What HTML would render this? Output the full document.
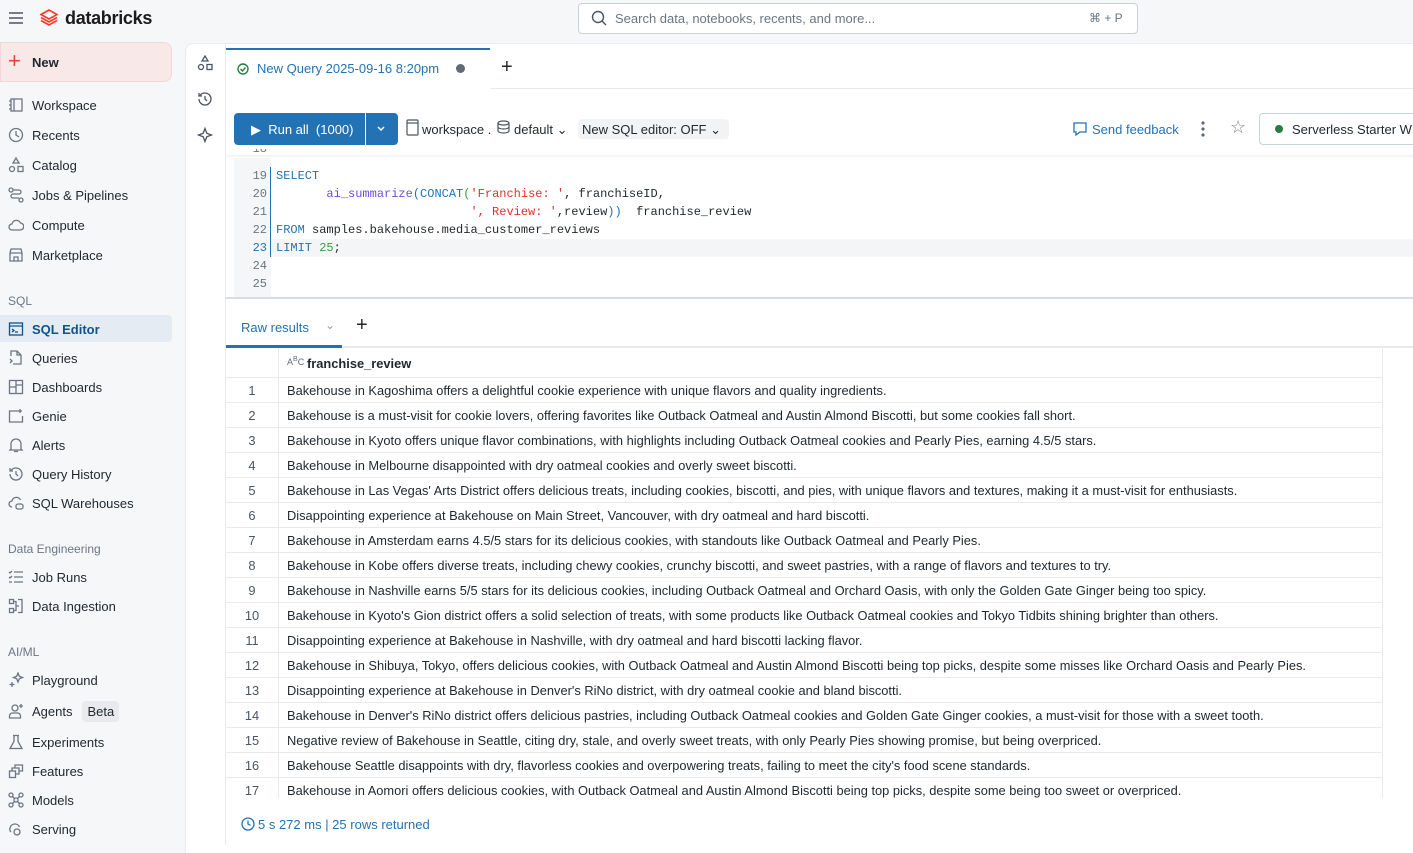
<!DOCTYPE html>
<html><head><meta charset="utf-8"><style>
*{box-sizing:border-box;margin:0;padding:0}
body{width:1413px;height:845px;overflow:hidden;background:#f6f7f9;font-family:"Liberation Sans",sans-serif;font-size:13px;color:#1f272d;position:relative}
.abs{position:absolute}
.nav{position:absolute;left:8px;display:flex;align-items:center;gap:8px;height:26px;font-size:13px}
.nav svg{width:16px;height:16px;stroke:#6b7682;fill:none;stroke-width:1.3}
.sec{position:absolute;left:8px;font-size:12px;color:#6b7682}
.code{position:absolute;left:276px;font-family:"Liberation Mono",monospace;font-size:12px;white-space:pre;line-height:18px}
.ln{position:absolute;left:234px;width:33px;text-align:right;font-family:"Liberation Mono",monospace;font-size:12px;color:#6b7682;line-height:18px}
.kw{color:#2272b4}.fn{color:#6b4fd8}.st{color:#e1302a}.nm{color:#3b9b3b}
.row{position:absolute;left:226px;width:1157px;height:25px;border-bottom:1px solid #e8eaed;font-size:12.85px}
.row .i{position:absolute;left:0;width:52px;text-align:center;top:5px;color:#4a5561}
.row .t{position:absolute;left:61px;top:5px;white-space:nowrap}
</style></head><body>
<!-- top bar -->
<svg class="abs" style="left:8px;top:11px" width="16" height="14" viewBox="0 0 16 14"><path d="M1 2h14M1 7h14M1 12h14" stroke="#4a5561" stroke-width="1.5"/></svg>
<svg class="abs" style="left:40px;top:9px" width="18" height="17" viewBox="0 0 18 17"><path d="M9 1L1 5.5 9 10 17 5.5z M1 8.5L9 13 17 8.5 M1 11.5L9 16 17 11.5" fill="none" stroke="#ff3621" stroke-width="1.6"/></svg>
<div class="abs" style="left:65px;top:8px;font-size:18px;font-weight:bold;color:#1b1b1b;letter-spacing:-0.3px">databricks</div>
<div class="abs" style="left:578px;top:3px;width:560px;height:31px;border:1px solid #cbd1d8;border-radius:4px;background:#fff"></div>
<svg class="abs" style="left:591px;top:10px" width="16" height="16" viewBox="0 0 16 16"><circle cx="7" cy="7" r="5.5" fill="none" stroke="#4a5561" stroke-width="1.4"/><path d="M11 11l4 4" stroke="#4a5561" stroke-width="1.4"/></svg>
<div class="abs" style="left:615px;top:11px;color:#6b7682">Search data, notebooks, recents, and more...</div>
<div class="abs" style="left:1089px;top:11px;color:#6b7682;font-size:12px">⌘ + P</div>
<!-- sidebar -->
<div class="abs" style="left:0;top:42px;width:172px;height:40px;background:#f8e8e8;border:1px solid #f3d7d7;border-radius:0 8px 8px 0"></div>
<div class="abs" style="left:8px;top:51px;font-size:22px;color:#e0443a;line-height:20px">+</div>
<div class="abs" style="left:32px;top:55px;font-weight:bold;font-size:13px">New</div>
<div class="nav" style="top:92px"><svg viewBox="0 0 16 16"><rect x="3" y="2" width="11" height="12"/><path d="M6 2v12M1 4h2M1 8h2M1 12h2"/></svg>Workspace</div>
<div class="nav" style="top:122px"><svg viewBox="0 0 16 16"><circle cx="8" cy="8" r="6.5"/><path d="M8 4v4l3 2"/></svg>Recents</div>
<div class="nav" style="top:152px"><svg viewBox="0 0 16 16"><path d="M8 1l3 5H5z"/><circle cx="4" cy="12" r="2.5"/><rect x="10" y="9.5" width="5" height="5"/></svg>Catalog</div>
<div class="nav" style="top:182px"><svg viewBox="0 0 16 16"><circle cx="3" cy="3" r="2"/><circle cx="13" cy="13" r="2"/><path d="M5 3h6a2 2 0 010 4H5a2 2 0 000 4h6"/></svg>Jobs &amp; Pipelines</div>
<div class="nav" style="top:212px"><svg viewBox="0 0 16 16"><path d="M4 13a3 3 0 010-6 4.5 4.5 0 018.5-1A3.5 3.5 0 0112 13z"/></svg>Compute</div>
<div class="nav" style="top:242px"><svg viewBox="0 0 16 16"><path d="M2 6l1-4h10l1 4M2 6v8h12V6M2 6h12M6 14v-4h4v4"/></svg>Marketplace</div>
<div class="sec" style="top:294px">SQL</div>
<div class="abs" style="left:0;top:315px;width:172px;height:27px;background:#e4ebf2;border-radius:0 4px 4px 0"></div>
<div class="nav" style="top:316px;color:#0e538b;font-weight:bold"><svg viewBox="0 0 16 16" style="stroke:#0e538b"><rect x="1.5" y="2" width="13" height="12"/><path d="M1.5 5h13M4 8l2 1.5L4 11M7 11h3"/></svg>SQL Editor</div>
<div class="nav" style="top:345px"><svg viewBox="0 0 16 16"><path d="M3 6V1h6l4 4v9H8M9 1v4h4M2 9l2 2-2 2M5 14h3"/></svg>Queries</div>
<div class="nav" style="top:374px"><svg viewBox="0 0 16 16"><rect x="1.5" y="1.5" width="13" height="13"/><path d="M8 1.5v13M1.5 8H8M8 6h6.5"/></svg>Dashboards</div>
<div class="nav" style="top:403px"><svg viewBox="0 0 16 16"><path d="M10 3H1.5v11h13V8M12 1v4M10 3h4"/></svg>Genie</div>
<div class="nav" style="top:432px"><svg viewBox="0 0 16 16"><path d="M3 12V7a5 5 0 0110 0v5l1 1H2zM6 14.5h4"/></svg>Alerts</div>
<div class="nav" style="top:461px"><svg viewBox="0 0 16 16"><path d="M2 8a6 6 0 106-6 6 6 0 00-5 2.5M2 2v3h3M8 5v3l2 2"/></svg>Query History</div>
<div class="nav" style="top:490px"><svg viewBox="0 0 16 16"><path d="M4 12a3 3 0 010-6 4.5 4.5 0 018.5-1"/><rect x="8" y="9" width="7" height="5" rx="2"/></svg>SQL Warehouses</div>
<div class="sec" style="top:542px">Data Engineering</div>
<div class="nav" style="top:564px"><svg viewBox="0 0 16 16"><path d="M6 3h9M6 8h9M6 13h9M1 3l1 1 2-2M1 8l1 1 2-2M1 13h3"/></svg>Job Runs</div>
<div class="nav" style="top:593px"><svg viewBox="0 0 16 16"><rect x="1.5" y="1.5" width="4" height="4"/><rect x="1.5" y="10.5" width="4" height="4"/><path d="M10 1.5h4v13h-4M5.5 3.5H8v9H5.5M8 8h3"/></svg>Data Ingestion</div>
<div class="sec" style="top:645px">AI/ML</div>
<div class="nav" style="top:667px"><svg viewBox="0 0 16 16"><path d="M10 1l1.3 3.2L14.5 5.5 11.3 6.8 10 10 8.7 6.8 5.5 5.5 8.7 4.2zM4 10v5M1.5 12.5h5"/></svg>Playground</div>
<div class="nav" style="top:698px"><svg viewBox="0 0 16 16"><circle cx="7" cy="5" r="3"/><path d="M1.5 15v-2a3 3 0 013-3h5a3 3 0 013 3v2zM13 1v4M11 3h4"/></svg>Agents <span style="background:#e8eaed;border-radius:4px;padding:3px 5px;margin-left:2px">Beta</span></div>
<div class="nav" style="top:729px"><svg viewBox="0 0 16 16"><path d="M5 1.5h6M6 1.5v6L2 14.5h12L10 7.5v-6"/></svg>Experiments</div>
<div class="nav" style="top:758px"><svg viewBox="0 0 16 16"><rect x="1.5" y="8" width="6" height="6.5"/><path d="M4 8V5h7v6H7.5M7 5V2h7.5v6H11"/></svg>Features</div>
<div class="nav" style="top:787px"><svg viewBox="0 0 16 16"><circle cx="3" cy="3" r="2"/><circle cx="13" cy="3" r="2"/><circle cx="3" cy="13" r="2"/><circle cx="13" cy="13" r="2"/><circle cx="8" cy="8" r="2"/><path d="M4.5 4.5l2 2M11.5 4.5l-2 2M4.5 11.5l2-2M11.5 11.5l-2-2"/></svg>Models</div>
<div class="nav" style="top:816px"><svg viewBox="0 0 16 16"><path d="M3 11a4 4 0 01-1-4 5 5 0 019.5-1"/><circle cx="9" cy="11" r="3"/></svg>Serving</div>
<!-- main panel -->
<div class="abs" style="left:185px;top:43px;width:1240px;height:810px;background:#fff;border-radius:8px 0 0 0;border-left:1px solid #e8eaed;border-top:1px solid #e8eaed"></div>
<div class="abs" style="left:225px;top:43px;width:1px;height:802px;background:#e8eaed"></div>
<svg class="abs" style="left:197px;top:55px" width="16" height="16" viewBox="0 0 16 16" fill="none" stroke="#4a5561" stroke-width="1.3"><path d="M8 1l3 5H5z"/><circle cx="4" cy="12" r="2.5"/><rect x="10" y="9.5" width="5" height="5"/></svg>
<svg class="abs" style="left:197px;top:91px" width="16" height="16" viewBox="0 0 16 16" fill="none" stroke="#4a5561" stroke-width="1.3"><path d="M2 8a6 6 0 106-6 6 6 0 00-5 2.5M2 2v3h3M8 5v3l2 2"/></svg>
<svg class="abs" style="left:197px;top:127px" width="16" height="16" viewBox="0 0 16 16" fill="none" stroke="#4a5561" stroke-width="1.3"><path d="M8 1.5L9.8 6.2 14.5 8 9.8 9.8 8 14.5 6.2 9.8 1.5 8 6.2 6.2z"/></svg>
<!-- tabs -->
<div class="abs" style="left:226px;top:88px;width:1187px;height:1px;background:#e8eaed"></div>
<div class="abs" style="left:226px;top:48px;width:264px;height:41px;background:#fff;border-top:2px solid #2272b4"></div>
<svg class="abs" style="left:237px;top:63px" width="12" height="12" viewBox="0 0 12 12" fill="none" stroke="#277c43" stroke-width="1.4"><circle cx="6" cy="6" r="5"/><path d="M3.5 6l2 2 3-3.5"/></svg>
<div class="abs" style="left:257px;top:61px;color:#2272b4;font-size:13px">New Query 2025-09-16 8:20pm</div>
<div class="abs" style="left:456px;top:64px;width:9px;height:9px;border-radius:50%;background:#5f6b77"></div>
<div class="abs" style="left:501px;top:56px;font-size:20px;color:#1f272d">+</div>
<!-- toolbar -->
<div class="abs" style="left:234px;top:113px;width:164px;height:32px;background:#2272b4;border-radius:4px"></div>
<div class="abs" style="left:365px;top:113px;width:1px;height:32px;background:#fff"></div>
<div class="abs" style="left:251px;top:122px;color:#fff;font-size:13px">▶&nbsp; Run all&nbsp; (1000)</div>
<svg class="abs" style="left:376px;top:125px" width="10" height="8" viewBox="0 0 10 8"><path d="M2 2l3 3 3-3" fill="none" stroke="#fff" stroke-width="1.5"/></svg>
<svg class="abs" style="left:406px;top:119px" width="13" height="17" viewBox="0 0 13 17" fill="none" stroke="#4a5561" stroke-width="1.2"><rect x="1" y="1" width="11" height="15" rx="1"/><path d="M1 4h11"/></svg>
<div class="abs" style="left:422px;top:122px">workspace .</div>
<svg class="abs" style="left:497px;top:120px" width="13" height="14" viewBox="0 0 13 14" fill="none" stroke="#4a5561" stroke-width="1.2"><ellipse cx="6.5" cy="3" rx="5.5" ry="2"/><path d="M1 3v8c0 1 2.5 2 5.5 2s5.5-1 5.5-2V3M1 7c0 1 2.5 2 5.5 2S12 8 12 7"/></svg>
<div class="abs" style="left:514px;top:122px">default ⌄</div>
<div class="abs" style="left:578px;top:119px;width:151px;height:20px;background:#f2f3f5;border-radius:4px"></div>
<div class="abs" style="left:582px;top:122px">New SQL editor: OFF ⌄</div>
<svg class="abs" style="left:1072px;top:121px" width="16" height="16" viewBox="0 0 16 16" fill="none" stroke="#2272b4" stroke-width="1.3"><path d="M2 2h12v9H8l-4 3v-3H2z"/><path d="M5.5 6.5h.1M8 6.5h.1M10.5 6.5h.1" stroke-width="1.6"/></svg>
<div class="abs" style="left:1092px;top:122px;color:#2272b4">Send feedback</div>
<div class="abs" style="left:1201px;top:121px;width:4px;height:16px;background:radial-gradient(circle at 2px 2px,#5f6b77 1.6px,transparent 1.8px) 0 0/4px 6px"></div>
<div class="abs" style="left:1230px;top:117px;font-size:18px;color:#7a8591">☆</div>
<div class="abs" style="left:1259px;top:113px;width:170px;height:32px;border:1px solid #cbd1d8;border-radius:4px"></div>
<div class="abs" style="left:1275px;top:125px;width:8px;height:8px;border-radius:50%;background:#277c43"></div>
<div class="abs" style="left:1292px;top:122px">Serverless Starter W</div>
<!-- editor -->
<div class="abs" style="left:226px;top:155px;width:1187px;height:3px;background:linear-gradient(#eef0f2,#fff)"></div>
<div class="abs" style="left:234px;top:158px;width:37px;height:140px;background:#f5f6f7"></div>
<div class="abs" style="left:271px;top:239px;width:1142px;height:18px;background:#f4f5f6"></div>
<div class="abs" style="left:270px;top:167px;width:1px;height:90px;background:#2272b4"></div>
<div class="ln" style="top:149px;height:10px;overflow:hidden;line-height:0">18</div>
<div class="ln" style="top:167px">19</div><div class="ln" style="top:185px">20</div><div class="ln" style="top:203px">21</div><div class="ln" style="top:221px">22</div><div class="ln" style="top:239px;color:#2272b4">23</div><div class="ln" style="top:257px">24</div><div class="ln" style="top:275px">25</div>
<div class="code" style="top:167px"><span class="kw">SELECT</span>
       <span class="fn">ai_summarize</span><span class="kw">(CONCAT</span><span class="nm">(</span><span class="st">'Franchise: '</span>, franchiseID,
                           <span class="st">', Review: '</span>,review<span class="kw">))</span>  franchise_review
<span class="kw">FROM</span> samples.bakehouse.media_customer_reviews
<span class="kw">LIMIT</span> <span class="nm">25</span>;</div>
<div class="abs" style="left:226px;top:297px;width:1187px;height:2px;background:#d8dde3"></div>
<!-- results -->
<div class="abs" style="left:241px;top:320px;color:#2272b4">Raw results</div>
<div class="abs" style="left:325px;top:318px;color:#9aa3ad;font-size:12px">⌄</div>
<div class="abs" style="left:356px;top:314px;font-size:20px">+</div>
<div class="abs" style="left:226px;top:346px;width:1187px;height:2px;background:#e8eaed"></div>
<div class="abs" style="left:226px;top:345px;width:116px;height:3px;background:#2272b4"></div>
<div class="abs" style="left:278px;top:348px;width:1px;height:450px;background:#e8eaed"></div>
<div class="abs" style="left:1382px;top:348px;width:1px;height:450px;background:#e8eaed"></div>
<div class="abs" style="left:226px;top:377px;width:1157px;height:1px;background:#e8eaed"></div>
<div class="abs" style="left:287px;top:356px;font-size:9px;color:#5f6b77">A<sup style="font-size:7px">B</sup>C</div>
<div class="abs" style="left:307px;top:356px;font-size:12.85px;font-weight:bold">franchise_review</div>
<div class="row" style="top:378px"><span class="i">1</span><span class="t">Bakehouse in Kagoshima offers a delightful cookie experience with unique flavors and quality ingredients.</span></div>
<div class="row" style="top:403px"><span class="i">2</span><span class="t">Bakehouse is a must-visit for cookie lovers, offering favorites like Outback Oatmeal and Austin Almond Biscotti, but some cookies fall short.</span></div>
<div class="row" style="top:428px"><span class="i">3</span><span class="t">Bakehouse in Kyoto offers unique flavor combinations, with highlights including Outback Oatmeal cookies and Pearly Pies, earning 4.5/5 stars.</span></div>
<div class="row" style="top:453px"><span class="i">4</span><span class="t">Bakehouse in Melbourne disappointed with dry oatmeal cookies and overly sweet biscotti.</span></div>
<div class="row" style="top:478px"><span class="i">5</span><span class="t">Bakehouse in Las Vegas' Arts District offers delicious treats, including cookies, biscotti, and pies, with unique flavors and textures, making it a must-visit for enthusiasts.</span></div>
<div class="row" style="top:503px"><span class="i">6</span><span class="t">Disappointing experience at Bakehouse on Main Street, Vancouver, with dry oatmeal and hard biscotti.</span></div>
<div class="row" style="top:528px"><span class="i">7</span><span class="t">Bakehouse in Amsterdam earns 4.5/5 stars for its delicious cookies, with standouts like Outback Oatmeal and Pearly Pies.</span></div>
<div class="row" style="top:553px"><span class="i">8</span><span class="t">Bakehouse in Kobe offers diverse treats, including chewy cookies, crunchy biscotti, and sweet pastries, with a range of flavors and textures to try.</span></div>
<div class="row" style="top:578px"><span class="i">9</span><span class="t">Bakehouse in Nashville earns 5/5 stars for its delicious cookies, including Outback Oatmeal and Orchard Oasis, with only the Golden Gate Ginger being too spicy.</span></div>
<div class="row" style="top:603px"><span class="i">10</span><span class="t">Bakehouse in Kyoto's Gion district offers a solid selection of treats, with some products like Outback Oatmeal cookies and Tokyo Tidbits shining brighter than others.</span></div>
<div class="row" style="top:628px"><span class="i">11</span><span class="t">Disappointing experience at Bakehouse in Nashville, with dry oatmeal and hard biscotti lacking flavor.</span></div>
<div class="row" style="top:653px"><span class="i">12</span><span class="t">Bakehouse in Shibuya, Tokyo, offers delicious cookies, with Outback Oatmeal and Austin Almond Biscotti being top picks, despite some misses like Orchard Oasis and Pearly Pies.</span></div>
<div class="row" style="top:678px"><span class="i">13</span><span class="t">Disappointing experience at Bakehouse in Denver's RiNo district, with dry oatmeal cookie and bland biscotti.</span></div>
<div class="row" style="top:703px"><span class="i">14</span><span class="t">Bakehouse in Denver's RiNo district offers delicious pastries, including Outback Oatmeal cookies and Golden Gate Ginger cookies, a must-visit for those with a sweet tooth.</span></div>
<div class="row" style="top:728px"><span class="i">15</span><span class="t">Negative review of Bakehouse in Seattle, citing dry, stale, and overly sweet treats, with only Pearly Pies showing promise, but being overpriced.</span></div>
<div class="row" style="top:753px"><span class="i">16</span><span class="t">Bakehouse Seattle disappoints with dry, flavorless cookies and overpowering treats, failing to meet the city's food scene standards.</span></div>
<div class="row" style="top:778px;border-bottom:none;height:20px;overflow:hidden"><span class="i">17</span><span class="t">Bakehouse in Aomori offers delicious cookies, with Outback Oatmeal and Austin Almond Biscotti being top picks, despite some being too sweet or overpriced.</span></div>
<svg class="abs" style="left:241px;top:817px" width="14" height="14" viewBox="0 0 14 14" fill="none" stroke="#2272b4" stroke-width="1.3"><circle cx="7" cy="7" r="6"/><path d="M7 3.5V7l2.5 1.5"/></svg>
<div class="abs" style="left:258px;top:817px;color:#2272b4">5 s 272 ms | 25 rows returned</div>
</body></html>
